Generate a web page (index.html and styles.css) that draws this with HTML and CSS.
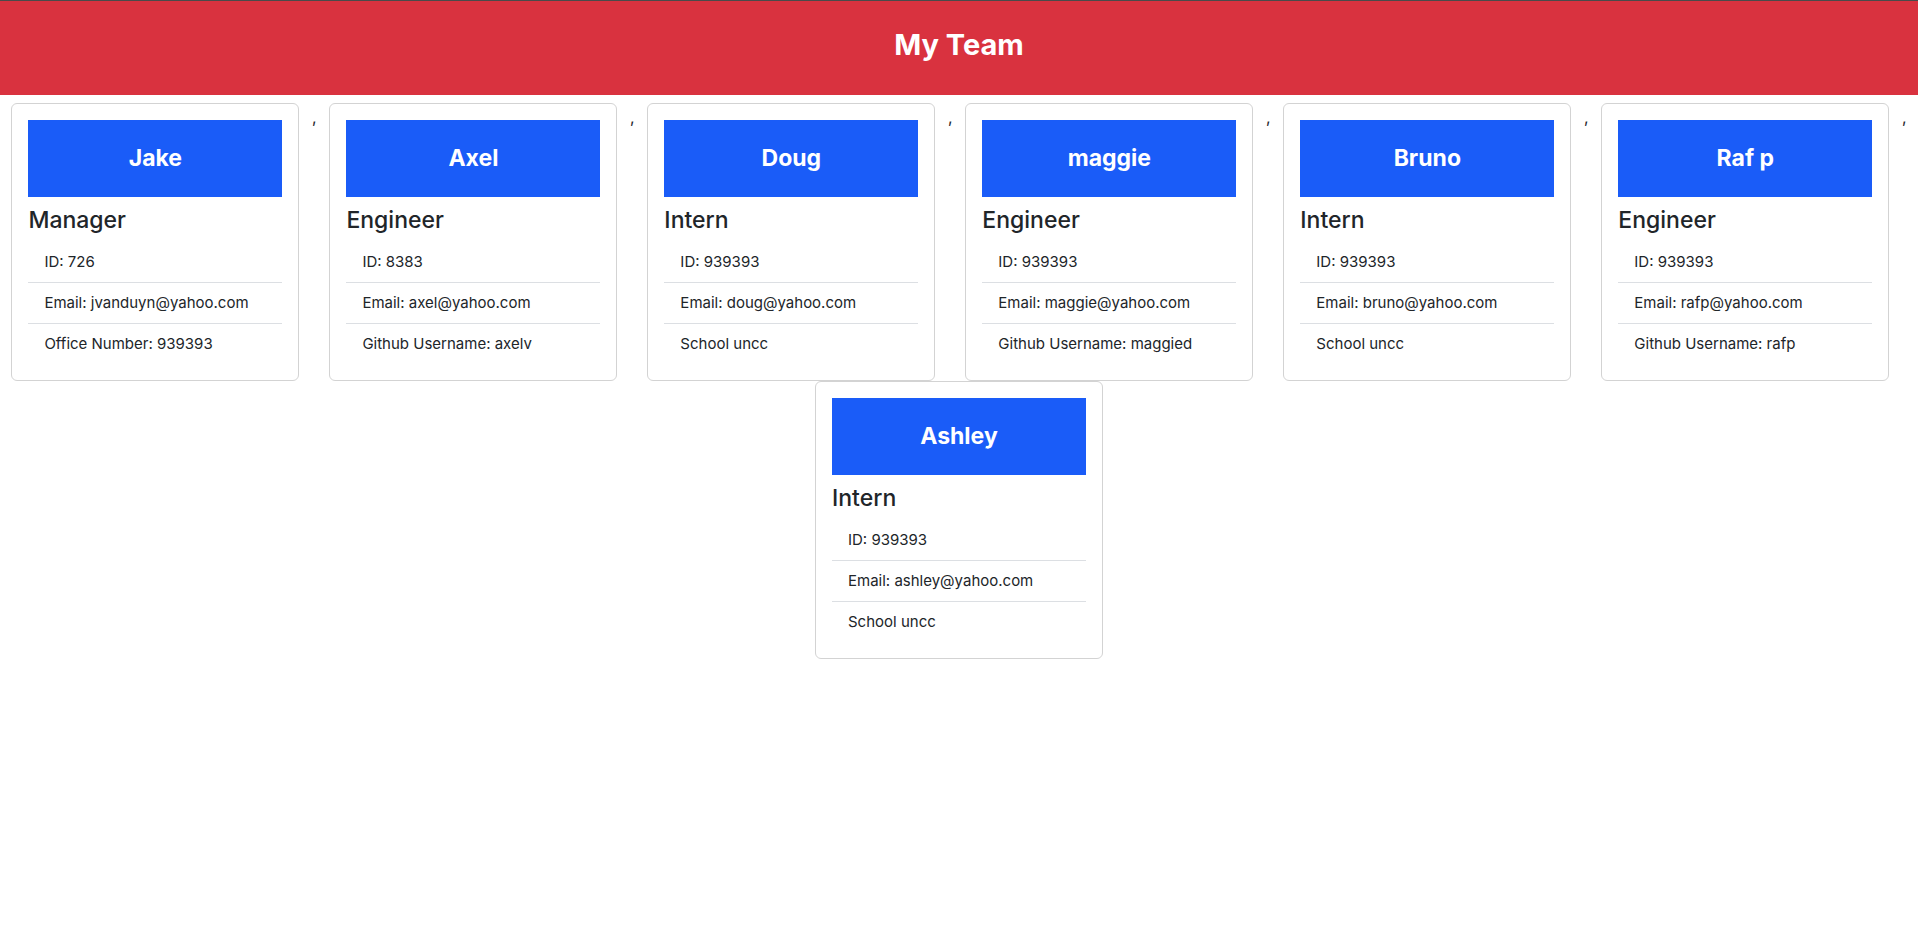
FILE: index.html
```html
<!DOCTYPE html>
<html lang="en">
<head>
<meta charset="utf-8">
<title>My Team</title>
<link rel="stylesheet" href="styles.css">
</head>
<body>
<header class="masthead">
  <h1 class="masthead-title">My Team</h1>
</header>
<main class="team">
  <div class="card">
    <div class="card-name">Jake</div>
    <h4 class="card-role">Manager</h4>
    <ul class="details">
      <li class="detail">ID: 726</li>
      <li class="detail">Email: jvanduyn@yahoo.com</li>
      <li class="detail">Office Number: 939393</li>
    </ul>
  </div><span class="sep">,</span>
  <div class="card">
    <div class="card-name">Axel</div>
    <h4 class="card-role">Engineer</h4>
    <ul class="details">
      <li class="detail">ID: 8383</li>
      <li class="detail">Email: axel@yahoo.com</li>
      <li class="detail">Github Username: axelv</li>
    </ul>
  </div><span class="sep">,</span>
  <div class="card">
    <div class="card-name">Doug</div>
    <h4 class="card-role">Intern</h4>
    <ul class="details">
      <li class="detail">ID: 939393</li>
      <li class="detail">Email: doug@yahoo.com</li>
      <li class="detail">School uncc</li>
    </ul>
  </div><span class="sep">,</span>
  <div class="card">
    <div class="card-name">maggie</div>
    <h4 class="card-role">Engineer</h4>
    <ul class="details">
      <li class="detail">ID: 939393</li>
      <li class="detail">Email: maggie@yahoo.com</li>
      <li class="detail">Github Username: maggied</li>
    </ul>
  </div><span class="sep">,</span>
  <div class="card">
    <div class="card-name">Bruno</div>
    <h4 class="card-role">Intern</h4>
    <ul class="details">
      <li class="detail">ID: 939393</li>
      <li class="detail">Email: bruno@yahoo.com</li>
      <li class="detail">School uncc</li>
    </ul>
  </div><span class="sep">,</span>
  <div class="card">
    <div class="card-name">Raf p</div>
    <h4 class="card-role">Engineer</h4>
    <ul class="details">
      <li class="detail">ID: 939393</li>
      <li class="detail">Email: rafp@yahoo.com</li>
      <li class="detail">Github Username: rafp</li>
    </ul>
  </div><span class="sep">,</span>
  <div class="card">
    <div class="card-name">Ashley</div>
    <h4 class="card-role">Intern</h4>
    <ul class="details">
      <li class="detail">ID: 939393</li>
      <li class="detail">Email: ashley@yahoo.com</li>
      <li class="detail">School uncc</li>
    </ul>
  </div>
</main>
</body>
</html>
```

FILE: styles.css
```css
* {
  box-sizing: border-box;
}

html, body {
  margin: 0;
  padding: 0;
  background: #ffffff;
}

body {
  font-family: Inter, "Noto Sans", "Liberation Sans", sans-serif;
  font-size: 16px;
  line-height: 24px;
  color: #212529;
}

.masthead {
  height: 95px;
  border-top: 1px solid #4a4a4a;
  background: #d9323f;
  display: flex;
  align-items: center;
  justify-content: center;
  margin-bottom: 8px;
  padding-bottom: 6px;
}

.masthead-title {
  margin: 0;
  font-size: 29px;
  font-weight: 700;
  line-height: 34px;
  color: #ffffff;
}

.team {
  display: flex;
  flex-wrap: wrap;
  justify-content: center;
  column-gap: 12.7px;
}

.card {
  width: 288px;
  border: 1px solid #d3d3d3;
  border-radius: 6px;
  padding: 16px;
  background: #ffffff;
}

.card-name {
  background: #1a5cf8;
  color: #ffffff;
  text-align: center;
  font-size: 23px;
  font-weight: 700;
  line-height: 29px;
  padding: 24px 0;
  margin-bottom: 9px;
}

.card-role {
  margin: 0 0 7px;
  font-size: 23px;
  font-weight: 500;
  line-height: 29px;
}

.details {
  list-style: none;
  margin: 0;
  padding: 0;
}

.detail {
  padding: 8px 16px;
  font-size: 15px;
  line-height: 24px;
  border-top: 1px solid #dcdfe3;
}

.detail:first-child {
  border-top: none;
}

.sep {
  font-size: 16px;
  line-height: 24px;
  padding-top: 2px;
}
```
